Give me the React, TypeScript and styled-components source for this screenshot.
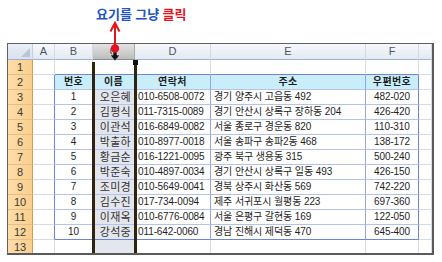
import React from "react";
import styled, { createGlobalStyle } from "styled-components";

const GRID = "#d5dce8";
const OUTER = "#6f86d6";
const INNER_V = "#93a6de";
const INNER_H = "#b4c2ec";

const letters = ["A", "B", "C", "D", "E", "F", ""];
const header = ["번호", "이름", "연락처", "주소", "우편번호"];
const data = [
  ["1", "오은혜", "010-6508-0072", "경기 양주시 고읍동 492", "482-020"],
  ["2", "김평식", "011-7315-0089", "경기 안산시 상록구 장하동 204", "426-420"],
  ["3", "이관석", "016-6849-0082", "서울 종로구 경운동 820", "110-310"],
  ["4", "박출하", "010-8977-0018", "서울 송파구 송파2동 468", "138-172"],
  ["5", "황금순", "016-1221-0095", "광주 북구 생용동 315", "500-240"],
  ["6", "박준숙", "010-4897-0034", "경기 안산시 상록구 일동 493", "426-150"],
  ["7", "조미경", "010-5649-0041", "경북 상주시 화산동 569", "742-220"],
  ["8", "김수진", "017-734-0094", "제주 서귀포시 월평동 223", "697-360"],
  ["9", "이재옥", "010-6776-0084", "서울 은평구 갈현동 169", "122-050"],
  ["10", "강석중", "011-642-0060", "경남 진해시 제덕동 470", "645-400"],
];

// alignment per sheet column (A..extra)
const aligns = ["left", "center", "right", "left", "left", "center", "left"];

const GlobalStyle = createGlobalStyle`
  html, body {
    margin: 0;
    padding: 0;
    background: #fff;
  }
  body {
    width: 442px;
    height: 262px;
    overflow: hidden;
    font-family: "Liberation Sans", "Noto Sans CJK KR", sans-serif;
  }
`;

const Page = styled.div`
  position: relative;
  width: 442px;
  height: 262px;
`;

const Caption = styled.div`
  height: 43px;
  box-sizing: border-box;
  padding: 5px 0 0 96px;
  font-family: "Noto Sans CJK KR", sans-serif;
  font-weight: 700;
  font-size: 13px;
  line-height: 18px;
  letter-spacing: 0.1px;
  color: #2153c6;
`;

const Red = styled.span`
  color: #e3121c;
`;

const Sheet = styled.div`
  position: relative;
  margin-left: 7px;
  width: 424px;
  height: 209px;
  border: 1px solid #626262;
  border-right: 2px solid #5a5a5a;
  border-bottom: 2px solid #5a5a5a;
  overflow: hidden;
  display: grid;
  grid-template-columns: 25px 22px 38px 42px 76px 155px 53px 13px;
  grid-template-rows: 16px repeat(13, 15px);
  background: #fff;
`;

const Corner = styled.div`
  position: relative;
  box-sizing: border-box;
  border-right: 1px solid #c3cfdf;
  border-bottom: 1px solid #9eb3cc;
  background: linear-gradient(#e9eef6, #d9e2ee);
  &::after {
    content: "";
    position: absolute;
    right: 2px;
    bottom: 2px;
    border-style: solid;
    border-width: 0 0 9px 9px;
    border-color: transparent transparent #b9c6d8 transparent;
  }
`;

const ColHead = styled.div<{ $selected?: boolean }>`
  box-sizing: border-box;
  display: flex;
  align-items: center;
  justify-content: center;
  border-right: 1px solid ${(p) => (p.$selected ? "#a9a9a9" : "#d0d9e5")};
  border-bottom: 1px solid ${(p) => (p.$selected ? "#8c8c8c" : "#9eb3cc")};
  background: ${(p) =>
    p.$selected
      ? "linear-gradient(#e2e2e2, #c9c9c9 70%, #bdbdbd)"
      : "linear-gradient(#f6f8fb, #e3e9f2)"};
  color: #4b5566;
  font-size: 11px;
  line-height: 1;
`;

const RowHead = styled.div`
  box-sizing: border-box;
  display: flex;
  align-items: center;
  justify-content: center;
  border-right: 1px solid #d39b52;
  border-bottom: 1px solid #e6be86;
  background: linear-gradient(90deg, #fddda9, #f9cf8c);
  color: #3a3a3a;
  font-size: 11px;
  line-height: 1;
`;

const Cell = styled.div<{
  $right: string;
  $bottom: string;
  $bg: string;
  $align: string;
  $head?: boolean;
  $name?: boolean;
}>`
  box-sizing: border-box;
  display: flex;
  align-items: center;
  justify-content: ${(p) =>
    p.$align === "center" ? "center" : p.$align === "right" ? "flex-end" : "flex-start"};
  padding: 0 ${(p) => (p.$align === "right" ? "3px" : "0")} 0
    ${(p) => (p.$align === "left" ? "3px" : "0")};
  border-right: 1px solid ${(p) => p.$right};
  border-bottom: 1px solid ${(p) => p.$bottom};
  background: ${(p) => p.$bg};
  color: ${(p) => (p.$name ? "#333" : "#1e1e1e")};
  font-size: ${(p) => (p.$name ? "11px" : "10px")};
  font-weight: ${(p) => (p.$head ? 700 : 400)};
  letter-spacing: ${(p) => (p.$head ? "0.4px" : p.$name ? "0.3px" : "-0.1px")};
  white-space: nowrap;
  overflow: visible;
  line-height: 1;
`;

const Selection = styled.div`
  position: absolute;
  left: 84px;
  top: 18px;
  width: 45px;
  bottom: -2px;
  box-sizing: border-box;
  border-left: 3px solid #2e2410;
  border-right: 3px solid #2e2410;
  pointer-events: none;
  &::after {
    content: "";
    position: absolute;
    right: -4px;
    top: -2px;
    width: 5px;
    height: 5px;
    background: #111;
  }
`;

const Pointer = styled.svg`
  position: absolute;
  left: 104px;
  top: 20px;
`;

function cellColors(r: number, c: number) {
  const inTableRow = r >= 2 && r <= 12;
  const inTableCol = c >= 2 && c <= 6;
  let right = GRID;
  if (inTableRow) {
    if (c === 1 || c === 6) right = OUTER;
    else if (c >= 2 && c <= 5) right = INNER_V;
  }
  let bottom = GRID;
  if (inTableCol) {
    if (r === 1 || r === 12) bottom = OUTER;
    else if (r >= 2 && r <= 11) bottom = INNER_H;
  }
  let bg = "#fff";
  if (r === 2 && inTableCol) bg = "#c9eefa";
  else if (c === 3 && r >= 3) bg = "#e4e6ee";
  return { right, bottom, bg };
}

function rowValues(r: number): string[] {
  if (r === 2) return ["", ...header, ""];
  if (r >= 3 && r <= 12) return ["", ...data[r - 3], ""];
  return ["", "", "", "", "", "", ""];
}

export default function App() {
  const rowNums = Array.from({ length: 13 }, (_, i) => i + 1);
  return (
    <Page>
      <GlobalStyle />
      <Caption>
        요기를 그냥 <Red>클릭</Red>
      </Caption>
      <Sheet>
        <Corner />
        {letters.map((l, i) => (
          <ColHead key={"h" + i} $selected={l === "C"}>
            {l}
          </ColHead>
        ))}
        {rowNums.map((r) => (
          <React.Fragment key={r}>
            <RowHead>{r}</RowHead>
            {rowValues(r).map((v, i) => {
              const c = i + 1;
              const { right, bottom, bg } = cellColors(r, c);
              return (
                <Cell
                  key={c}
                  $right={right}
                  $bottom={bottom}
                  $bg={bg}
                  $align={r === 2 ? "center" : aligns[i]}
                  $head={r === 2}
                  $name={c === 3 && r > 2}
                >
                  {v}
                </Cell>
              );
            })}
          </React.Fragment>
        ))}
        <Selection />
      </Sheet>
      <Pointer width="22" height="42" viewBox="0 0 22 42">
        <path d="M9 30 h4 v5 h3 l-5 6 l-5 -6 h3 z" fill="#111" stroke="#fff" strokeWidth="0.6" />
        <line x1="11" y1="4" x2="11" y2="28" stroke="#e3121c" strokeWidth="2" />
        <polyline
          points="6.5,11.5 11,3 15.5,11.5"
          fill="none"
          stroke="#e3121c"
          strokeWidth="2"
          strokeLinejoin="miter"
        />
        <circle cx="11" cy="28.5" r="4.2" fill="#e3121c" />
      </Pointer>
    </Page>
  );
}
